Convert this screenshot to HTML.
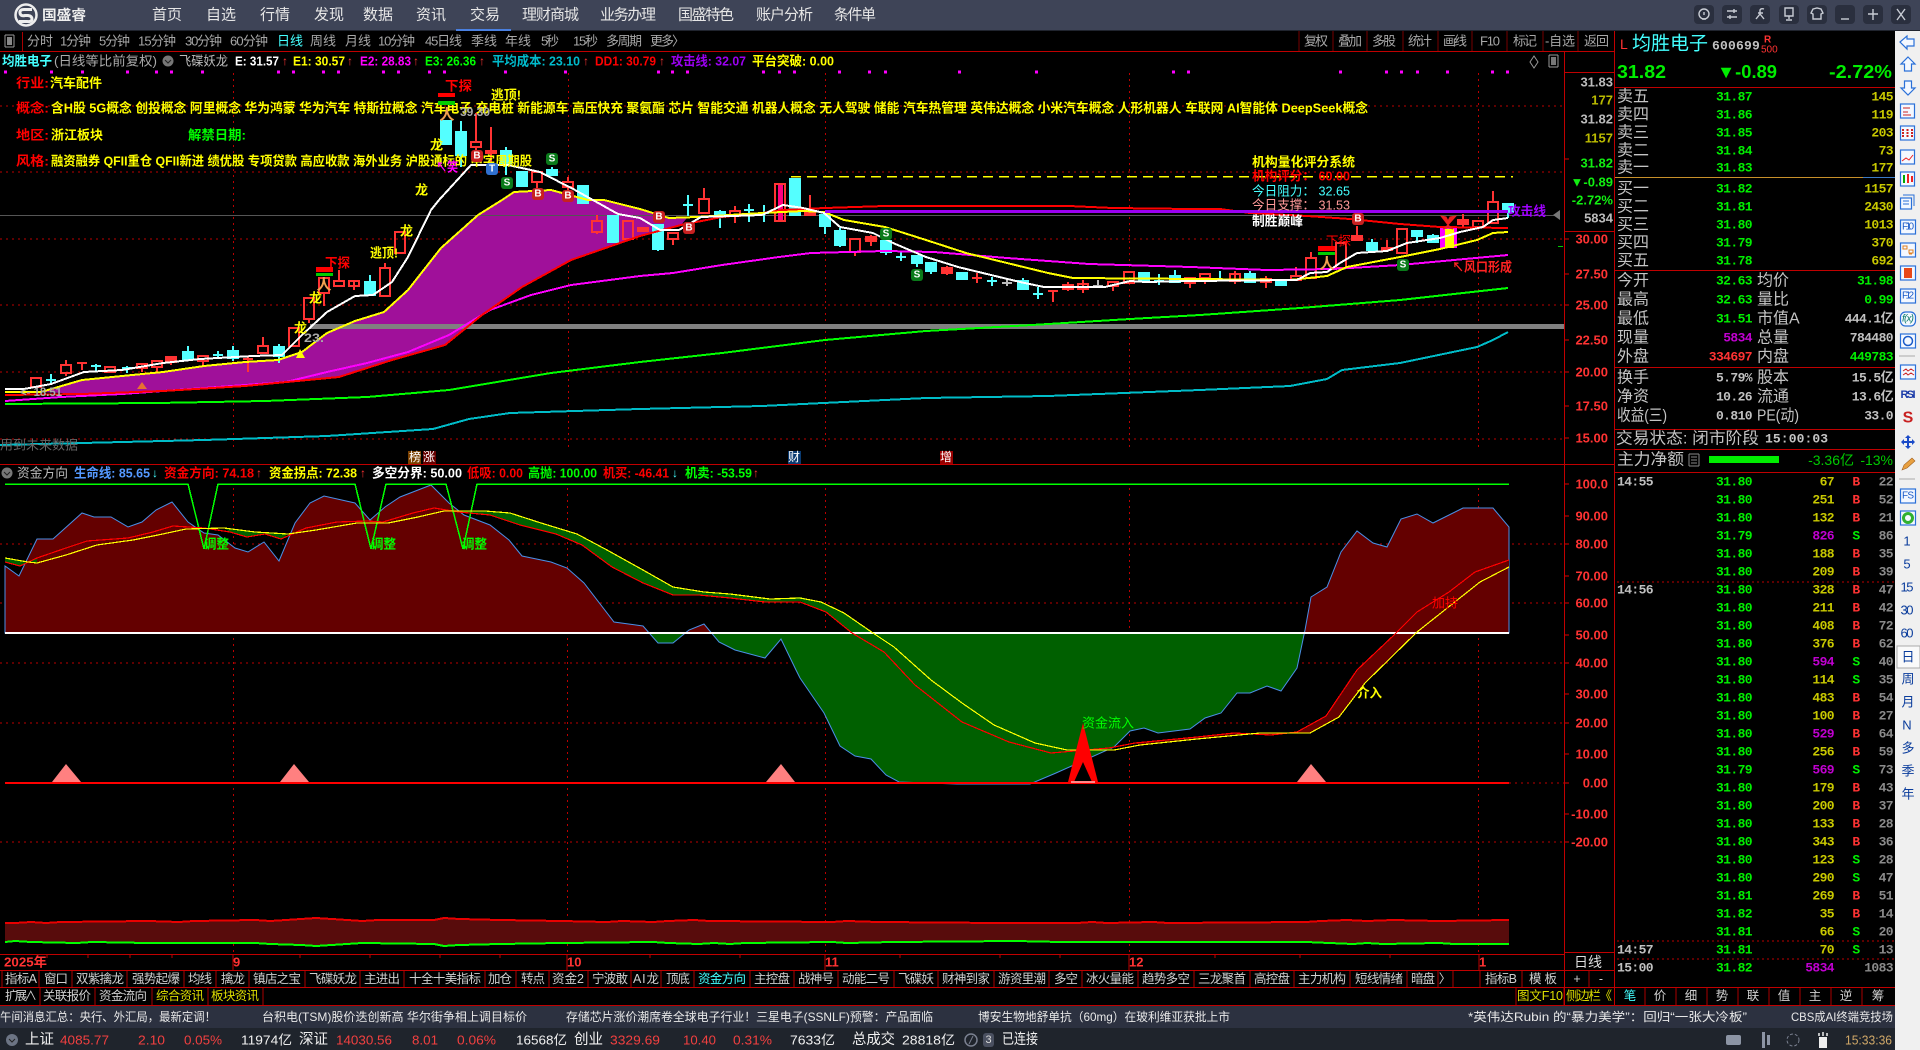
<!DOCTYPE html>
<html lang="zh"><head><meta charset="utf-8"><title>国盛睿</title>
<style>
html,body{margin:0;padding:0;background:#000;width:1920px;height:1050px;overflow:hidden}
svg{display:block;font-family:"Liberation Sans","Noto Sans CJK SC",sans-serif}
text{dominant-baseline:central;white-space:pre}
.cr{shape-rendering:crispEdges}
.b{font-weight:700}
.m{font-family:"Liberation Mono","Noto Sans CJK SC",monospace;font-size:13px;letter-spacing:-.6px;font-weight:700}
.e{text-anchor:end}
.mid{text-anchor:middle}
.lb{font-size:16px;fill:#c4c4c4}
.lg{font-size:13px;font-weight:700}
.ov{font-size:13px;font-weight:700}
.ax{font-size:13px;font-weight:700;text-anchor:end}
.tb{font-size:13px;fill:#a8a8a8}
.tab{font-size:12.5px;fill:#cfcfcf;text-anchor:middle}
.nav{font-size:15px;fill:#e6e6e6}
.news{font-size:12px;fill:#e8e8e8}
.st{font-size:13px}
.cj{font-size:14.5px}
.side{font-size:13px;fill:#0a3c9c;text-anchor:middle}
</style></head><body>
<svg xmlns="http://www.w3.org/2000/svg" width="1920" height="1050" viewBox="0 0 1920 1050">
<defs>
<clipPath id="up"><rect x="0" y="464" width="1564" height="169"/></clipPath>
<clipPath id="dn"><rect x="0" y="633" width="1564" height="160"/></clipPath>
<polygon id="bl" points="5,633 5,566 19,576 37,539 53,539 82,513 94,517 111,517 128,527 142,522 156,510 172,502 188,522 204,533 218,535 235,548 248,552 264,542 279,561 295,523 310,503 324,496 355,503 370,520 385,507 400,497 431,485 449,503 464,515 490,525 509,540 522,556 551,562 567,568 584,583 614,622 643,626 658,643 673,643 689,630 704,624 719,642 735,650 765,658 781,639 796,670 800,678 824,713 840,746 855,756 871,759 886,775 899,782 957,784 1030,784 1056,773 1114,747 1130,731 1144,728 1158,733 1190,729 1205,718 1221,713 1237,693 1250,693 1267,686 1281,691 1297,668 1305,630 1311,597 1327,587 1341,552 1357,531 1373,543 1387,547 1401,519 1417,514 1433,523 1463,508 1493,508 1509,527 1509,633"/>
</defs>
<rect width="1920" height="1050" fill="#000"/>

<!-- top bar -->
<rect class="cr" width="1920" height="30" fill="#3e4457"/>
<rect class="cr" y="30" width="1920" height="1" fill="#20242e"/>
<circle cx="26" cy="15" r="10.5" fill="none" stroke="#eee" stroke-width="2.5"/>
<path d="M32 9.5H24Q19.5 9.5 20 13T25 15.5H28Q32 16 32 19T27 21.5H19" fill="none" stroke="#eee" stroke-width="3"/>
<text class="b" x="42" y="15" font-size="14" fill="#eee" textLength="44" lengthAdjust="spacingAndGlyphs">国盛睿</text>
<g class="nav">
<text x="152" y="15">首页</text><text x="206" y="15">自选</text><text x="260" y="15">行情</text><text x="314" y="15">发现</text><text x="363" y="15">数据</text><text x="416" y="15">资讯</text><text x="470" y="15">交易</text><text x="522" y="15" textLength="57">理财商城</text><text x="600" y="15" textLength="56">业务办理</text><text x="678" y="15" textLength="56">国盛特色</text><text x="756" y="15" textLength="57">账户分析</text><text x="834" y="15" textLength="42">条件单</text>
</g>
<rect class="cr" x="456" y="29" width="55" height="2" fill="#4a80e0"/>
<g fill="#2a2f3e">
<rect x="1694" y="5" width="20" height="19" rx="4"/><rect x="1722" y="5" width="20" height="19" rx="4"/><rect x="1750" y="5" width="20" height="19" rx="4"/><rect x="1779" y="5" width="20" height="19" rx="4"/><rect x="1807" y="5" width="20" height="19" rx="4"/><rect x="1835" y="5" width="20" height="19" rx="4"/><rect x="1863" y="5" width="20" height="19" rx="4"/><rect x="1891" y="5" width="20" height="19" rx="4"/>
</g>
<g fill="none" stroke="#c8ccd4" stroke-width="1.4">
<circle cx="1704" cy="14" r="5"/><path d="M1704 12v3M1702 19h4"/>
<path d="M1727 11h10M1727 17h10M1734 9v4M1730 15v4"/>
<path d="M1756 19l4-5v-4q1-2 4-1M1758 13h5M1760 14l4 5"/>
<path d="M1785 8h8v8h-8zM1789 16v3M1786 20h6"/>
<path d="M1813 9l4-1 4 1 2 4-2 1v5h-8v-5l-2-1z"/>
<path d="M1841 19h8"/>
<path d="M1873 9v11M1868 14h10"/>
<path d="M1897 9l8 11M1905 9l-8 11"/>
</g>

<!-- right white sidebar -->
<rect class="cr" x="1895" y="31" width="25" height="1019" fill="#f0f0f0"/>

<!-- toolbar -->
<rect class="cr" x="5" y="35" width="9" height="12" fill="none" stroke="#999" rx="1"/>
<rect class="cr" x="7" y="37" width="5" height="8" fill="#888"/>
<rect class="cr" x="22" y="32" width="1" height="19" fill="#a00"/>
<g class="tb">
<text x="27" y="41">分时</text><text x="60" y="41" textLength="31">1分钟</text><text x="99" y="41" textLength="31">5分钟</text><text x="138" y="41" textLength="38">15分钟</text><text x="185" y="41" textLength="37">30分钟</text><text x="230" y="41" textLength="38">60分钟</text><text x="277" y="41" style="fill:#4ff">日线</text><text x="310" y="41">周线</text><text x="345" y="41">月线</text><text x="378" y="41" textLength="37">10分钟</text><text x="425" y="41" textLength="37">45日线</text><text x="471" y="41">季线</text><text x="505" y="41">年线</text><text x="541" y="41" textLength="18">5秒</text><text x="573" y="41" textLength="25">15秒</text><text x="606" y="41" textLength="36">多周期</text><text x="650" y="41" textLength="35">更多〉</text>
<text x="1304" y="41" textLength="24">复权</text><text x="1338" y="41" textLength="24">叠加</text><text x="1372" y="41" textLength="24">多股</text><text x="1408" y="41" textLength="24">统计</text><text x="1443" y="41" textLength="24">画线</text><text x="1480" y="41" textLength="20">F10</text><text x="1513" y="41" textLength="24">标记</text><text x="1545" y="41" textLength="30">-自选</text><text x="1584" y="41" textLength="25">返回</text>
</g>
<path class="cr" d="M1299 31V51M1333 31V51M1367 31V51M1403 31V51M1438 31V51M1472 31V51M1507 31V51M1543 31V51M1578 31V51" stroke="#700" fill="none"/>

<!-- grid main -->
<g class="cr" stroke="#b00" fill="none" stroke-dasharray="2 4">
<path d="M0 106H1564M0 172H1564M0 239H1564M0 305H1564M0 372H1564M0 439H1564"/>
<path d="M233.500 73V451M568.500 73V451M825.500 73V451M1129.500 73V451M1478.500 73V451"/>
<path d="M0 544H1564M0 603H1564M0 663H1564M0 723H1564M1509 783H1564M0 842H1564"/>
<path d="M233.500 488V953M567.500 488V953M825.500 488V953M1129.500 488V953M1478.500 488V953"/>
</g>
<!-- main cloud -->
<polygon fill="#a0109a" points="41,392 82,380 122,376 163,372 204,366 245,362 278,360 302,352 327,333 355,321 384,312 408,290 441,248 478,215 502,200 514,192 551,190 588,200 604,200 640,208 669,218 687,218 681,225 640,236 571,260 522,287 482,315 445,345 392,360 339,377 245,386 163,391 82,394"/>
<rect class="cr" x="0" y="215" width="1560" height="1" fill="#555"/>
<polygon points="1553,215 1560,210 1560,220" fill="#777"/>
<rect class="cr" x="310" y="324" width="1254" height="5" fill="#808080"/>
<path class="cr" d="M791 176.500H1513" stroke="#ff0" stroke-width="1.500" stroke-dasharray="10 6" fill="none"/>

<!-- pink dots -->
<path class="cr" stroke="#f0f" stroke-width="3" fill="none" d="M4 72h3M50 72h3M81 72h3M126 72h3M155 72h3M170 72h3M201 72h3M277 72h3M292 72h3M322 72h3M337 72h3M382 72h3M397 72h3M428 72h3M443 72h3M504 72h3M564 72h3M657 72h3M671 72h3M686 72h3M762 72h3M778 72h3M793 72h3M838 72h3M868 72h3M884 72h3M958 72h3M1035 72h3M1172 72h3M1187 72h3M1339 72h3M1385 72h3M1400 72h3M1416 72h3M1446 72h3M1491 72h3M1506 72h3"/>

<!-- candles hollow red -->
<path class="cr" fill="none" stroke="#f33" stroke-width="2" d="M31 378H41V387H31ZM66 360V365M61 365H71V373H61ZM66 373V376M105 367H115V372H105ZM137 364H147V368H137ZM142 368V372M152 361H162V367H152ZM157 367V372M198 356H208V361H198ZM203 361V365M258 346H268V353H258ZM263 337V346M289 328H299V346H289ZM304 298H314V319H304ZM309 319V323M319 278H329V293H319ZM324 293V306M334 281H344V286H334ZM339 270V281M349 281H359V286H349ZM354 280V290M380 268H390V296H380ZM385 263V268M395 232H405V253H395ZM471 142H481V147H471ZM476 113V142M476 147V157M532 172H542V182H532ZM537 182V188M563 182H573V187H563ZM568 177V182M568 187V190M592 221H602V232H592ZM597 215V221M597 232V234M623 221H633V239H623ZM668 233H678V239H668ZM673 239V245M699 199H709V213H699ZM704 188V199M730 211H740V216H730ZM735 206V211M735 216V223M775 184H785V221H775ZM850 239H860V252H850ZM855 252V256M1063 285H1073V289H1063ZM1068 282V291M1078 284H1088V289H1078ZM1083 280V293M1108 282H1118V286H1108ZM1113 286V291M1124 272H1134V283H1124ZM1185 278H1195V283H1185ZM1190 283V288M1200 274H1210V278H1200ZM1205 278V284M1230 274H1240V281H1230ZM1235 271V284M1261 279H1271V282H1261ZM1266 276V288M1291 276H1301V280H1291ZM1296 267V276M1306 258H1316V278H1306ZM1311 252V258M1336 243H1346V268H1336ZM1397 229H1407V253H1397ZM1473 221H1483V227H1473ZM1488 202H1498V223H1488ZM1493 191V202"/>
<rect class="cr" x="778" y="185" width="5" height="35" fill="#ff0080"/>
<!-- candles filled red -->
<path class="cr" fill="#f33" stroke="#f33" stroke-width="2" d="M77 363H87M82 363V370M166 357H176V362H166ZM171 362V365M243 359H253M248 357V372M486 151H496V153H486ZM491 127V163M638 228H648V231H638ZM805 213H815V215H805ZM810 195V213M866 237H876V241H866ZM871 235V246M942 268H952V273H942ZM947 266V275M972 278H982M977 273V283M1048 291H1058M1053 290V302M1352 236H1362V240H1352ZM1357 226V236M1382 248H1392V250H1382ZM1387 240V251M1458 220H1468V224H1458ZM1463 214V228"/>
<!-- candles cyan -->
<path class="cr" fill="#54ffff" stroke="#54ffff" stroke-width="2" d="M46 380H56M51 374V385M91 366H101M96 364V372M122 368H132M127 366V373M183 352H193V359H183ZM188 346V352M213 355H223M218 351V359M228 351H238V358H228ZM233 346V361M274 347H284V356H274ZM279 344V363M365 282H375V295H365ZM370 275V282M441 121H451V144H441ZM456 132H466V155H456ZM461 121V167M501 151H511V163H501ZM506 147V175M517 172H527V186H517ZM547 170H557V175H547ZM552 167V170M578 186H588V203H578ZM608 216H618V242H608ZM653 225H663V249H653ZM658 249V251M683 205H693M688 195V216M715 212H725V217H715ZM720 210V228M744 210H754M749 204V222M759 213H769M764 205V222M790 179H800V215H790ZM820 215H830V226H820ZM825 226V234M835 231H845V245H835ZM840 228V247M881 241H891V252H881ZM886 252V255M896 257H906M901 252V261M912 256H922V263H912ZM917 263V267M926 263H936V271H926ZM931 271V274M957 273H967V279H957ZM987 281H997M992 277V286M1018 281H1028V289H1018ZM1023 278V281M1033 294H1043M1038 287V299M1139 273H1149V281H1139ZM1154 281H1164M1159 274V285M1170 276H1180V282H1170ZM1175 270V276M1220 271V280M1245 274H1255V282H1245ZM1250 271V274M1276 281H1286V285H1276ZM1367 243H1377V250H1367ZM1372 239V251M1412 231H1422V236H1412ZM1417 236V243M1428 236H1438V242H1428ZM1433 234V243M1503 204H1513V212H1503ZM1508 212V218"/>
<path class="cr" fill="none" stroke="#bbb" stroke-width="2" d="M1002 283H1012M1007 278V286M1093 286H1103M1098 280V287"/>
<!-- yellow/magenta candle -->
<rect class="cr" x="1440" y="227" width="17" height="21" fill="#f0f"/><rect class="cr" x="1445" y="229" width="9" height="19" fill="#ff0"/>

<!-- MAs -->
<g fill="none" stroke-width="2" class="cr">
<polyline stroke="#00bcc8" points="0,445 82,443 204,440 327,436 433,429 469,419 510,413 640,409 762,406 926,398 1048,396 1200,390 1290,386 1327,379 1342,370 1400,363 1477,347 1493,340 1508,332"/>
<polyline stroke="#0f0" points="5,404 157,403 265,401 367,397 449,390 551,373 640,362 722,353 825,340 926,331 1032,325 1130,319 1200,315 1300,308 1400,300 1508,288"/>
<polyline stroke="#f0f" points="5,401 61,397 122,394 204,388 286,382 327,372 367,363 408,352 449,335 490,310 531,295 571,285 640,276 673,273 722,265 779,257 811,253 885,251 934,252 1007,258 1089,264 1191,267 1267,270 1333,269 1400,265 1508,255"/>
<polyline stroke="#f00" points="5,395 82,394 163,391 245,386 339,377 392,360 445,345 482,315 522,287 571,260 640,236 681,225 722,217 762,213 783,210 825,208 885,206 1069,206 1113,208 1191,209 1220,209 1250,213 1307,216 1350,219 1400,224 1440,227 1508,228"/>
<polyline stroke="#ff0" points="5,392 41,392 82,380 122,376 163,372 204,366 245,362 278,360 302,352 327,333 355,321 384,312 408,290 441,248 478,215 502,200 514,192 551,190 588,200 604,200 640,209 669,218 697,217 762,213 803,211 824,212 844,220 885,227 926,240 966,253 1007,263 1048,273 1073,278 1200,279 1290,280 1327,276 1347,267 1400,257 1440,249 1477,240 1493,233 1508,232"/>
<polyline stroke="#fff" points="5,389 24,389 51,384 84,372 122,370 163,363 200,359 253,356 282,355 302,335 327,312 355,296 373,295 392,282 408,257 431,210 439,200 471,165 508,165 540,172 575,190 618,214 640,218 660,230 679,230 701,217 762,215 783,205 803,208 824,213 840,227 873,233 893,243 926,257 958,267 991,275 1020,282 1044,287 1105,287 1130,281 1146,282 1191,281 1297,280 1310,273 1327,272 1340,263 1357,253 1387,251 1407,243 1440,238 1460,232 1483,227 1493,220 1508,218"/>
</g>
<rect class="cr" x="825" y="210" width="683" height="3" fill="#9a00f0"/>

<!-- main text overlays -->
<g class="ov">
<text x="16" y="83" fill="#f00" textLength="33" lengthAdjust="spacingAndGlyphs">行业:</text><text x="50" y="83" fill="#ff0" textLength="52" lengthAdjust="spacingAndGlyphs">汽车配件</text>
<text x="16" y="108" fill="#f00" textLength="33" lengthAdjust="spacingAndGlyphs">概念:</text><text x="51" y="108" fill="#ff0" textLength="1317" lengthAdjust="spacingAndGlyphs">含H股 5G概念 创投概念 阿里概念 华为鸿蒙 华为汽车 特斯拉概念 汽车电子 充电桩 新能源车 高压快充 聚氨酯 芯片 智能交通 机器人概念 无人驾驶 储能 汽车热管理 英伟达概念 小米汽车概念 人形机器人 车联网 AI智能体 DeepSeek概念</text>
<text x="16" y="135" fill="#f00" textLength="33" lengthAdjust="spacingAndGlyphs">地区:</text><text x="51" y="135" fill="#ff0" textLength="52" lengthAdjust="spacingAndGlyphs">浙江板块</text>
<text x="188" y="135" fill="#0f0" textLength="58" lengthAdjust="spacingAndGlyphs">解禁日期:</text>
<text x="16" y="161" fill="#f00" textLength="33" lengthAdjust="spacingAndGlyphs">风格:</text><text x="51" y="161" fill="#ff0" textLength="481" lengthAdjust="spacingAndGlyphs">融资融券 QFII重仓 QFII新进 绩优股 专项贷款 高应收款 海外业务 沪股通标的 中字周期股</text>
</g>
<!-- marks -->
<rect class="cr" x="438" y="93" width="17" height="4" fill="#f00"/><rect class="cr" x="438" y="101" width="17" height="4" fill="#0c0"/>
<rect class="cr" x="316" y="267" width="17" height="5" fill="#f00"/><rect class="cr" x="316" y="273" width="17" height="3" fill="#0c0"/>
<rect class="cr" x="1318" y="246" width="17" height="5" fill="#f00"/><rect class="cr" x="1318" y="252" width="17" height="3" fill="#0c0"/>
<g class="ov">
<text x="445" y="86" fill="#f00" textLength="27" lengthAdjust="spacingAndGlyphs">下探</text>
<text x="491" y="95" fill="#ff0" textLength="30" lengthAdjust="spacingAndGlyphs">逃顶!</text>
<text x="325" y="263" fill="#f00" textLength="25" lengthAdjust="spacingAndGlyphs">下探</text>
<text x="370" y="253" fill="#ff0" textLength="28" lengthAdjust="spacingAndGlyphs">逃顶!</text>
<text x="1326" y="241" fill="#f00" font-weight="400" textLength="25" lengthAdjust="spacingAndGlyphs">下探</text>
<text x="430" y="145" fill="#ff0">龙</text><text x="415" y="190" fill="#ff0">龙</text>
<text x="309" y="298" fill="#ff0">龙</text><text x="294" y="328" fill="#ff0">龙</text><text x="400" y="231" fill="#ff0">龙</text>
<text x="436" y="167" fill="#f0f" textLength="22" lengthAdjust="spacingAndGlyphs">↖笑</text>
<text x="460" y="112" fill="#aaa" font-size="12" textLength="30" lengthAdjust="spacingAndGlyphs">39.30</text>
<text x="20" y="392" fill="#aaa" font-size="12" textLength="42" lengthAdjust="spacingAndGlyphs">&lt;- 18.51</text>
<text x="304" y="338" fill="#aaa" font-size="12" textLength="20" lengthAdjust="spacingAndGlyphs">23.</text>
</g>
<g font-size="15" font-weight="700" fill="#f0a050" text-anchor="middle"><text x="447" y="115">人</text><text x="324" y="285">人</text><text x="1327" y="264">人</text></g>
<polygon points="137,389 142,382 147,389" fill="#e87030"/>
<polygon points="300,349 305,358 296,358" fill="#ff0"/>
<!-- badges -->
<g fill="#c82020"><rect x="471" y="150" width="12" height="12" rx="3"/><rect x="532" y="188" width="12" height="12" rx="3"/><rect x="562" y="190" width="12" height="12" rx="3"/><rect x="653" y="211" width="12" height="12" rx="3"/><rect x="683" y="222" width="12" height="12" rx="3"/><rect x="1352" y="213" width="12" height="12" rx="3"/></g>
<g fill="#0a7a1a"><rect x="546" y="153" width="12" height="12" rx="3"/><rect x="501" y="177" width="12" height="12" rx="3"/><rect x="880" y="228" width="12" height="12" rx="3"/><rect x="911" y="269" width="12" height="12" rx="3"/><rect x="1397" y="259" width="12" height="12" rx="3"/></g>
<rect x="486" y="163" width="12" height="12" rx="3" fill="#3070d0"/>
<g font-size="10" fill="#fff" text-anchor="middle" font-weight="700"><text x="477" y="156">B</text><text x="538" y="194">B</text><text x="568" y="196">B</text><text x="659" y="217">B</text><text x="689" y="228">B</text><text x="1358" y="219">B</text><text x="552" y="159">S</text><text x="507" y="183">S</text><text x="886" y="234">S</text><text x="917" y="275">S</text><text x="1403" y="265">S</text><text x="492" y="169">T</text></g>
<path d="M1448 225L1441 216 1446 217 1448 221 1450 217 1456 216ZM1448 225L1443 229 1447 228ZM1448 225L1453 229 1449 228Z" fill="#e82020" stroke="#e82020"/>
<text class="ov" x="1508" y="211" fill="#a000ff" font-weight="400" textLength="38" lengthAdjust="spacingAndGlyphs">攻击线</text>
<text class="ov" x="1452" y="267" fill="#f22" textLength="60" lengthAdjust="spacingAndGlyphs">↖风口形成</text>
<g class="ov" font-size="13">
<text x="1252" y="162" fill="#ff0" textLength="103" lengthAdjust="spacingAndGlyphs">机构量化评分系统</text>
<text x="1252" y="176" fill="#f00" textLength="98" lengthAdjust="spacingAndGlyphs">机构评分： 60.00</text>
<text x="1252" y="191" fill="#4ff" font-weight="400" textLength="98" lengthAdjust="spacingAndGlyphs">今日阻力： 32.65</text>
<text x="1252" y="205" fill="#f99" font-weight="400" textLength="98" lengthAdjust="spacingAndGlyphs">今日支撑： 31.53</text>
<text x="1252" y="221" fill="#fff" textLength="51" lengthAdjust="spacingAndGlyphs">制胜巅峰</text>
</g>
<text x="0" y="445" font-size="13" fill="#666" textLength="78" lengthAdjust="spacingAndGlyphs">用到未来数据</text>
<rect class="cr" x="408" y="451" width="13" height="13" fill="#7a4000"/><rect class="cr" x="423" y="451" width="13" height="13" fill="#600"/>
<rect class="cr" x="788" y="451" width="13" height="13" fill="#0a3a70"/><rect class="cr" x="940" y="451" width="13" height="13" fill="#900"/>
<g font-size="12" fill="#fff" text-anchor="middle"><text x="415" y="457">榜</text><text x="429" y="457">涨</text><text x="794" y="457">财</text><text x="946" y="457">增</text></g>
<path d="M1534 56l4 6-4 6-4-6z" fill="none" stroke="#999"/><rect class="cr" x="1549" y="55" width="9" height="12" rx="1" fill="none" stroke="#999"/><rect class="cr" x="1551" y="57" width="5" height="8" fill="#777"/>

<!-- legend main -->
<g class="lg">
<text x="2" y="61" fill="#4ff" textLength="50" lengthAdjust="spacingAndGlyphs">均胜电子</text>
<text x="54" y="61" fill="#aaa" font-weight="400" textLength="103" lengthAdjust="spacingAndGlyphs">(日线等比前复权)</text>
<circle cx="168" cy="61" r="5.500" fill="#777"/><path d="M165 60l3 3 3-3" stroke="#222" fill="none"/>
<text x="179" y="61" fill="#bbb" font-weight="400" textLength="49" lengthAdjust="spacingAndGlyphs">飞碟妖龙</text>
<text x="235" y="61" fill="#fff" textLength="44" lengthAdjust="spacingAndGlyphs">E: 31.57</text><text x="282" y="61" fill="#f33" font-weight="400" font-size="12">↑</text>
<text x="293" y="61" fill="#ff0" textLength="52" lengthAdjust="spacingAndGlyphs">E1: 30.57</text><text x="347" y="61" fill="#f33" font-weight="400" font-size="12">↑</text>
<text x="360" y="61" fill="#f0f" textLength="51" lengthAdjust="spacingAndGlyphs">E2: 28.83</text><text x="413" y="61" fill="#f33" font-weight="400" font-size="12">↑</text>
<text x="425" y="61" fill="#0f0" textLength="51" lengthAdjust="spacingAndGlyphs">E3: 26.36</text><text x="479" y="61" fill="#f33" font-weight="400" font-size="12">↑</text>
<text x="492" y="61" fill="#0bc" textLength="88" lengthAdjust="spacingAndGlyphs">平均成本: 23.10</text><text x="583" y="61" fill="#f33" font-weight="400" font-size="12">↑</text>
<text x="595" y="61" fill="#f00" textLength="61" lengthAdjust="spacingAndGlyphs">DD1: 30.79</text><text x="659" y="61" fill="#f33" font-weight="400" font-size="12">↑</text>
<text x="671" y="61" fill="#9a00f0" textLength="75" lengthAdjust="spacingAndGlyphs">攻击线: 32.07</text>
<text x="752" y="61" fill="#ff0" textLength="82" lengthAdjust="spacingAndGlyphs">平台突破: 0.00</text>
</g>

<!-- lower panel -->
<use href="#bl" fill="#640000" clip-path="url(#up)"/>
<use href="#bl" fill="#006000" clip-path="url(#dn)"/>
<use href="#bl" fill="none" stroke="#4a90e8" stroke-width="1"/>
<polygon fill="#006000" points="444,511 485,511 510,513 541,523 577,534 607,550 643,570 673,587 704,592 730,594 770,599 800,597 821,602 844,613 873,633 894,647 931,680 962,703 994,725 1035,743 1067,750 1114,750 1109,748 1051,753 1009,742 962,722 915,685 884,652 852,633 826,612 800,601 765,602 730,598 699,595 673,595 643,583 612,567 582,545 556,534 520,525 490,515 459,512 444,509"/>
<polygon fill="#006000" points="5,558 28,562 37,563 37,558 20,566 5,562"/>
<polygon fill="#006000" points="224,528 255,532 288,534 281,539 265,534 247,537 230,532"/>
<polygon fill="#640000" points="1135,743 1197,737 1234,733 1271,735 1297,732 1326,716 1357,670 1394,635 1417,612 1449,592 1475,572 1509,560 1509,567 1480,582 1417,632 1365,683 1339,717 1310,733 1260,733 1197,739 1140,745"/>
<rect class="cr" x="5" y="632" width="1504" height="2" fill="#fff"/>
<polyline class="cr" fill="none" stroke="#0f0" stroke-width="1.500" points="5,484 188,484 204,549 218,484 355,484 371,549 386,484 446,484 463,549 477,484 1509,484"/>
<polyline class="cr" fill="none" stroke="#f00" stroke-width="1.200" points="5,562 20,566 37,558 66,548 87,541 128,538 153,532 173,526 204,528 230,532 247,537 265,534 281,539 306,528 337,522 367,521 383,522 413,513 434,508 459,512 490,515 520,525 556,534 582,545 612,567 643,583 673,595 699,595 730,598 765,602 800,602 826,612 852,633 884,652 915,685 962,722 1009,742 1051,753 1109,748 1135,743 1197,737 1234,733 1271,735 1297,732 1326,716 1357,670 1394,635 1417,612 1449,592 1475,572 1509,560"/>
<polyline class="cr" fill="none" stroke="#ff0" stroke-width="1.200" points="5,558 28,562 37,563 66,555 97,545 133,540 158,535 186,529 224,528 255,532 288,534 316,530 357,523 388,523 418,517 444,511 485,511 510,513 541,523 577,534 607,550 643,570 673,587 704,592 730,594 770,599 800,598 821,602 844,613 873,633 894,647 931,680 962,703 994,725 1035,743 1067,750 1114,750 1140,745 1197,739 1260,733 1310,733 1339,717 1365,683 1417,632 1480,582 1509,567"/>
<rect class="cr" x="5" y="782" width="1504" height="2" fill="#f00"/>
<g fill="#ff8080"><polygon points="66,764 81,782 52,782"/><polygon points="294,764 309,782 280,782"/><polygon points="781,764 795,782 766,782"/><polygon points="1311,764 1326,782 1297,782"/></g>
<polygon points="1083,723 1098,782 1092,782 1083,762 1074,782 1068,782" fill="#f00"/>
<rect class="cr" x="1071" y="781" width="24" height="2" fill="#f88"/>
<g class="ov">
<text x="204" y="544" fill="#0f0" textLength="25" lengthAdjust="spacingAndGlyphs">调整</text><text x="371" y="544" fill="#0f0" textLength="25" lengthAdjust="spacingAndGlyphs">调整</text><text x="462" y="544" fill="#0f0" textLength="25" lengthAdjust="spacingAndGlyphs">调整</text>
<text x="1082" y="723" fill="#0f0" font-weight="400" textLength="52" lengthAdjust="spacingAndGlyphs">资金流入</text>
<text x="1432" y="603" fill="#f00" font-weight="400" textLength="26" lengthAdjust="spacingAndGlyphs">加持</text>
<text x="1357" y="693" fill="#ff0" textLength="25" lengthAdjust="spacingAndGlyphs">介入</text>
</g>
<!-- legend lower -->
<g class="lg">
<circle cx="7" cy="473" r="5.500" fill="#777"/><path d="M4 472l3 3 3-3" stroke="#222" fill="none"/>
<text x="17" y="473" fill="#bbb" font-weight="400" textLength="51" lengthAdjust="spacingAndGlyphs">资金方向</text>
<text x="74" y="473" fill="#5599ff" textLength="76" lengthAdjust="spacingAndGlyphs">生命线: 85.65</text><text x="152" y="473" fill="#4ff" font-weight="400" font-size="12">↓</text>
<text x="164" y="473" fill="#f00" textLength="90" lengthAdjust="spacingAndGlyphs">资金方向: 74.18</text><text x="256" y="473" fill="#f33" font-weight="400" font-size="12">↑</text>
<text x="269" y="473" fill="#ff0" textLength="88" lengthAdjust="spacingAndGlyphs">资金拐点: 72.38</text><text x="360" y="473" fill="#f33" font-weight="400" font-size="12">↑</text>
<text x="372" y="473" fill="#fff" textLength="90" lengthAdjust="spacingAndGlyphs">多空分界: 50.00</text>
<text x="467" y="473" fill="#f00" textLength="56" lengthAdjust="spacingAndGlyphs">低吸: 0.00</text>
<text x="528" y="473" fill="#0f0" textLength="69" lengthAdjust="spacingAndGlyphs">高抛: 100.00</text>
<text x="603" y="473" fill="#f00" textLength="66" lengthAdjust="spacingAndGlyphs">机买: -46.41</text><text x="672" y="473" fill="#4ff" font-weight="400" font-size="12">↓</text>
<text x="685" y="473" fill="#0f0" textLength="67" lengthAdjust="spacingAndGlyphs">机卖: -53.59</text><text x="753" y="473" fill="#f33" font-weight="400" font-size="12">↑</text>
</g>
<!-- band -->
<polygon fill="#580c0c" points="5,923 15,923 31,922 46,923 61,922 148,921 179,922 194,921 255,920 270,921 286,920 301,919 316,918 332,919 347,920 362,921 378,920 434,920 444,918 459,919 500,920 561,921 607,922 622,921 653,922 668,921 694,920 709,921 832,922 847,921 878,922 1000,923 1077,923 1092,922 1107,923 1153,922 1168,923 1306,922 1321,921 1347,920 1367,921 1393,920 1439,921 1509,920 1509,944 1454,944 1439,943 1383,944 1367,943 1353,944 1306,942 1061,942 1015,941 893,942 847,943 832,942 745,943 730,944 714,943 699,944 668,943 653,942 561,943 500,944 459,945 444,946 434,944 362,943 347,944 316,946 301,945 270,944 255,943 148,943 92,942 77,943 31,942 15,941 5,942"/>
<polyline class="cr" fill="none" stroke="#e80000" stroke-width="2" points="5,923 15,923 31,922 46,923 61,922 148,921 179,922 194,921 255,920 270,921 286,920 301,919 316,918 332,919 347,920 362,921 378,920 434,920 444,918 459,919 500,920 561,921 607,922 622,921 653,922 668,921 694,920 709,921 832,922 847,921 878,922 1000,923 1077,923 1092,922 1107,923 1153,922 1168,923 1306,922 1321,921 1347,920 1367,921 1393,920 1439,921 1509,920"/>
<polyline class="cr" fill="none" stroke="#0f0" stroke-width="2" points="5,942 15,941 31,942 77,943 92,942 148,943 255,943 270,944 301,945 316,946 347,944 362,943 434,944 444,946 459,945 500,944 561,943 653,942 668,943 699,944 714,943 730,944 745,943 832,942 847,943 893,942 1015,941 1061,942 1306,942 1353,944 1367,943 1383,944 1439,943 1454,944 1509,944"/>

<!-- axis -->
<g class="ax" fill="#bbb"><text x="1613" y="82">31.83</text><text x="1613" y="119">31.82</text></g>
<g class="ax" fill="#bb0"><text x="1613" y="100">177</text><text x="1613" y="138">1157</text></g>
<g class="ax" fill="#1e1"><text x="1613" y="163">31.82</text><text x="1613" y="182">▼-0.89</text><text x="1613" y="200">-2.72%</text></g>
<text class="ax" x="1613" y="218" fill="#bbb">5834</text>
<g class="ax" fill="#f33">
<text x="1608" y="239">30.00</text><text x="1608" y="274">27.50</text><text x="1608" y="305">25.00</text><text x="1608" y="340">22.50</text><text x="1608" y="372">20.00</text><text x="1608" y="406">17.50</text><text x="1608" y="438">15.00</text>
<text x="1608" y="484">100.0</text><text x="1608" y="516">90.00</text><text x="1608" y="544">80.00</text><text x="1608" y="576">70.00</text><text x="1608" y="603">60.00</text><text x="1608" y="635">50.00</text><text x="1608" y="663">40.00</text><text x="1608" y="694">30.00</text><text x="1608" y="723">20.00</text><text x="1608" y="754">10.00</text><text x="1608" y="783">0.00</text><text x="1608" y="814">-10.00</text><text x="1608" y="842">-20.00</text>
</g>
<path class="cr" stroke="#d00" fill="none" d="M1564 159H1569M1564 239H1569M1564 274H1569M1564 305H1569M1564 340H1569M1564 372H1569M1564 406H1569M1564 438H1569M1564 484H1569M1564 516H1569M1564 544H1569M1564 576H1569M1564 603H1569M1564 635H1569M1564 663H1569M1564 694H1569M1564 723H1569M1564 754H1569M1564 783H1569M1564 814H1569M1564 842H1569"/>
<rect class="cr" x="1558" y="246" width="5" height="1" fill="#0c0"/>

<!-- date axis -->
<g class="b" font-size="13" fill="#f33"><text x="4" y="962" textLength="43" lengthAdjust="spacingAndGlyphs">2025年</text><text x="233" y="962">9</text><text x="567" y="962">10</text><text x="825" y="962">11</text><text x="1129" y="962">12</text><text x="1479" y="962">1</text></g>
<path class="cr" stroke="#b00" fill="none" d="M47 954V958M88 954V958M130 954V958M172 954V958M233 954V970M300 954V958M370 954V958M440 954V958M500 954V958M567 954V970M650 954V958M740 954V958M825 954V970M900 954V958M1000 954V958M1060 954V958M1129 954V970M1215 954V958M1300 954V958M1390 954V958M1479 954V970"/>
<text x="1588" y="962" font-size="14" fill="#ddd" class="mid">日线</text>

<!-- tabs -->
<g class="tab">
<text x="21" y="979" textLength="32">指标A</text><text x="56" y="979" textLength="24">窗口</text><text x="100" y="979" textLength="48">双紫擒龙</text><text x="156" y="979" textLength="48">强势起爆</text><text x="200" y="979" textLength="24">均线</text><text x="233" y="979" textLength="24">擒龙</text><text x="277" y="979" textLength="48">镇店之宝</text><text x="333" y="979" textLength="48">飞碟妖龙</text><text x="382" y="979" textLength="36">主进出</text><text x="445" y="979" textLength="72">十全十美指标</text><text x="500" y="979" textLength="24">加仓</text><text x="533" y="979" textLength="24">转点</text><text x="568" y="979" textLength="32">资金2</text><text x="610" y="979" textLength="36">宁波敢</text><text x="646" y="979" textLength="26">AI龙</text><text x="678" y="979" textLength="24">顶底</text><text x="722" y="979" textLength="48" style="fill:#4ff">资金方向</text><text x="772" y="979" textLength="36">主控盘</text><text x="816" y="979" textLength="36">战神号</text><text x="866" y="979" textLength="48">动能二号</text><text x="916" y="979" textLength="36">飞碟妖</text><text x="966" y="979" textLength="48">财神到家</text><text x="1022" y="979" textLength="48">游资里潮</text><text x="1066" y="979" textLength="24">多空</text><text x="1110" y="979" textLength="48">冰火量能</text><text x="1166" y="979" textLength="48">趋势多空</text><text x="1222" y="979" textLength="48">三龙聚首</text><text x="1272" y="979" textLength="36">高控盘</text><text x="1322" y="979" textLength="48">主力机构</text><text x="1379" y="979" textLength="48">短线情绪</text><text x="1423" y="979" textLength="24">暗盘</text><text x="1445" y="979">〉</text><text x="1501" y="979" textLength="32">指标B</text><text x="1543" y="979" textLength="28">模 板</text><text x="1577" y="979">+</text><text x="1601" y="979">-</text>
<text x="21" y="996" textLength="32">扩展∧</text><text x="67" y="996" textLength="48">关联报价</text><text x="123" y="996" textLength="48">资金流向</text><text x="180" y="996" textLength="48" style="fill:#dd0">综合资讯</text><text x="235" y="996" textLength="48" style="fill:#dd0">板块资讯</text>
<text x="1540" y="996" textLength="46" style="fill:#dd0">图文F10</text><text x="1589" y="996" textLength="46" style="fill:#dd0">侧边栏《</text>
<text x="1630" y="996" style="fill:#4ff">笔</text><text x="1660" y="996">价</text><text x="1691" y="996">细</text><text x="1722" y="996">势</text><text x="1753" y="996">联</text><text x="1784" y="996">值</text><text x="1815" y="996">主</text><text x="1846" y="996">逆</text><text x="1878" y="996">筹</text>
</g>
<path class="cr" stroke="#a00" fill="none" d="M2 970V987M39 970V987M72 970V987M127 970V987M184 970V987M216 970V987M249 970V987M305 970V987M360 970V987M404 970V987M485 970V987M516 970V987M549 970V987M588 970V987M631 970V987M661 970V987M694 970V987M750 970V987M794 970V987M838 970V987M894 970V987M938 970V987M994 970V987M1049 970V987M1082 970V987M1138 970V987M1194 970V987M1250 970V987M1294 970V987M1350 970V987M1407 970V987M1438 970V987M1453 970V987M1480 970V987M1522 970V987M1589 970V987
M40 987V1005M95 987V1005M152 987V1005M208 987V1005M263 987V1005M1516 987V1005M1564 987V1005M1645 987V1005M1676 987V1005M1707 987V1005M1738 987V1005M1769 987V1005M1800 987V1005M1831 987V1005M1862 987V1005"/>

<!-- frame lines -->
<g class="cr" fill="#c00000">
<rect x="0" y="51" width="1615" height="1"/>
<rect x="1564" y="72" width="51" height="1"/>
<rect x="1564" y="231" width="51" height="1"/>
<rect x="0" y="464" width="1615" height="1"/>
<rect x="0" y="954" width="1564" height="1"/><rect x="1564" y="952" width="51" height="1"/>
<rect x="0" y="970" width="1615" height="1"/>
<rect x="0" y="987" width="1895" height="1"/>
<rect x="1564" y="52" width="1" height="953"/>
<rect x="1614" y="31" width="1" height="974"/>
<rect x="1615" y="87" width="280" height="1"/>
<rect x="1615" y="270" width="280" height="1"/>
<rect x="1615" y="367" width="280" height="1"/>
<rect x="1615" y="429" width="280" height="1"/>
<rect x="1615" y="449" width="280" height="1"/>
<rect x="1615" y="472" width="280" height="1"/>
</g>
<rect class="cr" x="1615" y="177" width="248" height="1" fill="#c8902a"/><rect class="cr" x="1863" y="177" width="32" height="1" fill="#3a7ac8"/>

<!-- quote panel -->
<text x="1620" y="44" font-size="14" fill="#f33">L</text>
<text x="1632" y="44" font-size="19" fill="#4ff" textLength="76" lengthAdjust="spacingAndGlyphs">均胜电子</text>
<text class="m" x="1712" y="46" fill="#c0c0c0" style="letter-spacing:.2px">600699</text>
<text x="1764" y="40" font-size="10" fill="#f33" font-weight="700">R</text><text x="1761" y="50" font-size="10" fill="#f33">500</text>
<g class="b" font-size="18" fill="#0e0"><text x="1617" y="72" textLength="49" lengthAdjust="spacingAndGlyphs">31.82</text><text x="1717" y="72" textLength="60" lengthAdjust="spacingAndGlyphs">▼-0.89</text><text x="1829" y="72" textLength="63" lengthAdjust="spacingAndGlyphs">-2.72%</text></g>
<g class="lb">
<text x="1617" y="97">卖五</text><text x="1617" y="115">卖四</text><text x="1617" y="133">卖三</text><text x="1617" y="151">卖二</text><text x="1617" y="168">卖一</text>
<text x="1617" y="189">买一</text><text x="1617" y="207">买二</text><text x="1617" y="225">买三</text><text x="1617" y="243">买四</text><text x="1617" y="261">买五</text>
<text x="1617" y="281">今开</text><text x="1617" y="300">最高</text><text x="1617" y="319">最低</text><text x="1617" y="338">现量</text><text x="1617" y="357">外盘</text>
<text x="1757" y="281">均价</text><text x="1757" y="300">量比</text><text x="1757" y="319">市值A</text><text x="1757" y="338">总量</text><text x="1757" y="357">内盘</text>
<text x="1617" y="378">换手</text><text x="1617" y="397">净资</text><text x="1617" y="416" textLength="50" lengthAdjust="spacingAndGlyphs">收益(三)</text>
<text x="1757" y="378">股本</text><text x="1757" y="397">流通</text><text x="1757" y="416" textLength="42" lengthAdjust="spacingAndGlyphs">PE(动)</text>
<text x="1616" y="439" textLength="143" lengthAdjust="spacingAndGlyphs">交易状态: 闭市阶段</text>
<text x="1617" y="460" textLength="67" lengthAdjust="spacingAndGlyphs">主力净额</text>
</g>
<text class="m" x="1765" y="439" fill="#c4c4c4" style="letter-spacing:.1px">15:00:03</text>
<rect class="cr" x="1689" y="454" width="10" height="12" rx="1" fill="none" stroke="#888"/><path class="cr" d="M1691 457h6M1691 460h6M1691 463h6" stroke="#888"/>
<rect class="cr" x="1709" y="456" width="70" height="7" fill="#0e0"/>
<text class="e" x="1854" y="460" font-size="14" fill="#0c0">-3.36亿</text><text class="e" x="1893" y="460" font-size="14" fill="#0c0">-13%</text>
<g class="m e" fill="#0e0">
<text x="1752" y="97">31.87</text><text x="1752" y="115">31.86</text><text x="1752" y="133">31.85</text><text x="1752" y="151">31.84</text><text x="1752" y="168">31.83</text><text x="1752" y="189">31.82</text><text x="1752" y="207">31.81</text><text x="1752" y="225">31.80</text><text x="1752" y="243">31.79</text><text x="1752" y="261">31.78</text>
<text x="1752" y="281">32.63</text><text x="1752" y="300">32.63</text><text x="1752" y="319">31.51</text>
<text x="1893" y="281">31.98</text><text x="1893" y="300">0.99</text><text x="1893" y="357">449783</text>
</g>
<g class="m e" fill="#c8c800">
<text x="1893" y="97">145</text><text x="1893" y="115">119</text><text x="1893" y="133">203</text><text x="1893" y="151">73</text><text x="1893" y="168">177</text><text x="1893" y="189">1157</text><text x="1893" y="207">2430</text><text x="1893" y="225">1013</text><text x="1893" y="243">370</text><text x="1893" y="261">692</text>
</g>
<text class="m e" x="1752" y="338" fill="#c000d0">5834</text><text class="m e" x="1752" y="357" fill="#f33">334697</text>
<g class="m e" fill="#c0c0c0">
<text x="1893" y="319">444.1亿</text><text x="1893" y="338">784480</text>
<text x="1752" y="378">5.79%</text><text x="1752" y="397">10.26</text><text x="1752" y="416">0.810</text>
<text x="1893" y="378">15.5亿</text><text x="1893" y="397">13.6亿</text><text x="1893" y="416">33.0</text>
</g>

<!-- ticks -->
<g class="m" fill="#c0c0c0"><text x="1617" y="482">14:55</text><text x="1617" y="590">14:56</text><text x="1617" y="950">14:57</text><text x="1617" y="968">15:00</text></g>
<path class="cr" d="M1617 582H1895M1617 941H1895M1617 959H1895" stroke="#b00" stroke-dasharray="2 3" fill="none"/>
<g class="m e" fill="#0e0">
<text x="1752" y="482">31.80</text><text x="1752" y="500">31.80</text><text x="1752" y="518">31.80</text><text x="1752" y="536">31.79</text><text x="1752" y="554">31.80</text><text x="1752" y="572">31.80</text><text x="1752" y="590">31.80</text><text x="1752" y="608">31.80</text><text x="1752" y="626">31.80</text><text x="1752" y="644">31.80</text><text x="1752" y="662">31.80</text><text x="1752" y="680">31.80</text><text x="1752" y="698">31.80</text><text x="1752" y="716">31.80</text><text x="1752" y="734">31.80</text><text x="1752" y="752">31.80</text><text x="1752" y="770">31.79</text><text x="1752" y="788">31.80</text><text x="1752" y="806">31.80</text><text x="1752" y="824">31.80</text><text x="1752" y="842">31.80</text><text x="1752" y="860">31.80</text><text x="1752" y="878">31.80</text><text x="1752" y="896">31.81</text><text x="1752" y="914">31.82</text><text x="1752" y="932">31.81</text><text x="1752" y="950">31.81</text><text x="1752" y="968">31.82</text>
</g>
<g class="m e" fill="#c8c800">
<text x="1834" y="482">67</text><text x="1834" y="500">251</text><text x="1834" y="518">132</text><text x="1834" y="554">188</text><text x="1834" y="572">209</text><text x="1834" y="590">328</text><text x="1834" y="608">211</text><text x="1834" y="626">408</text><text x="1834" y="644">376</text><text x="1834" y="680">114</text><text x="1834" y="698">483</text><text x="1834" y="716">100</text><text x="1834" y="752">256</text><text x="1834" y="788">179</text><text x="1834" y="806">200</text><text x="1834" y="824">133</text><text x="1834" y="842">343</text><text x="1834" y="860">123</text><text x="1834" y="878">290</text><text x="1834" y="896">269</text><text x="1834" y="914">35</text><text x="1834" y="932">66</text><text x="1834" y="950">70</text>
</g>
<g class="m e" fill="#c000d0"><text x="1834" y="536">826</text><text x="1834" y="662">594</text><text x="1834" y="734">529</text><text x="1834" y="770">569</text><text x="1834" y="968">5834</text></g>
<g class="m mid" fill="#f33"><text x="1856" y="482">B</text><text x="1856" y="500">B</text><text x="1856" y="518">B</text><text x="1856" y="554">B</text><text x="1856" y="572">B</text><text x="1856" y="590">B</text><text x="1856" y="608">B</text><text x="1856" y="626">B</text><text x="1856" y="644">B</text><text x="1856" y="698">B</text><text x="1856" y="716">B</text><text x="1856" y="734">B</text><text x="1856" y="752">B</text><text x="1856" y="788">B</text><text x="1856" y="806">B</text><text x="1856" y="824">B</text><text x="1856" y="842">B</text><text x="1856" y="896">B</text><text x="1856" y="914">B</text></g>
<g class="m mid" fill="#0e0"><text x="1856" y="536">S</text><text x="1856" y="662">S</text><text x="1856" y="680">S</text><text x="1856" y="770">S</text><text x="1856" y="860">S</text><text x="1856" y="878">S</text><text x="1856" y="932">S</text><text x="1856" y="950">S</text></g>
<g class="m e" fill="#8a8a8a">
<text x="1893" y="482">22</text><text x="1893" y="500">52</text><text x="1893" y="518">21</text><text x="1893" y="536">86</text><text x="1893" y="554">35</text><text x="1893" y="572">39</text><text x="1893" y="590">47</text><text x="1893" y="608">42</text><text x="1893" y="626">72</text><text x="1893" y="644">62</text><text x="1893" y="662">40</text><text x="1893" y="680">35</text><text x="1893" y="698">54</text><text x="1893" y="716">27</text><text x="1893" y="734">64</text><text x="1893" y="752">59</text><text x="1893" y="770">73</text><text x="1893" y="788">43</text><text x="1893" y="806">37</text><text x="1893" y="824">28</text><text x="1893" y="842">36</text><text x="1893" y="860">28</text><text x="1893" y="878">47</text><text x="1893" y="896">51</text><text x="1893" y="914">14</text><text x="1893" y="932">20</text><text x="1893" y="950">13</text><text x="1893" y="968">1083</text>
</g>

<!-- news bar -->
<rect class="cr" x="0" y="1005" width="1895" height="1" fill="#c00000"/>
<rect class="cr" x="0" y="1006" width="1895" height="22" fill="#2c3140"/>
<rect class="cr" x="0" y="1028" width="1895" height="22" fill="#1f242c"/>
<g class="news">
<text x="0" y="1017" textLength="216" lengthAdjust="spacingAndGlyphs">午间消息汇总：央行、外汇局，最新定调！</text>
<text x="262" y="1017" textLength="265" lengthAdjust="spacingAndGlyphs">台积电(TSM)股价迭创新高 华尔街争相上调目标价</text>
<text x="566" y="1017" textLength="367" lengthAdjust="spacingAndGlyphs">存储芯片涨价潮席卷全球电子行业！三星电子(SSNLF)预警：产品面临</text>
<text x="978" y="1017" textLength="252" lengthAdjust="spacingAndGlyphs">博安生物地舒单抗（60mg）在玻利维亚获批上市</text>
<text x="1468" y="1017" textLength="279" lengthAdjust="spacingAndGlyphs">*英伟达Rubin 的“暴力美学”：回归“一张大冷板”</text>
<text x="1791" y="1017" textLength="102" lengthAdjust="spacingAndGlyphs">CBS成AI终端竞技场</text>
</g>
<!-- status bar -->
<circle cx="12" cy="1040" r="6" fill="#6c7484"/><path d="M9 1039l3 3 3-3" stroke="#222" fill="none"/>
<g class="st" fill="#f0f0f0"><text class="cj" x="25" y="1040" textLength="29" lengthAdjust="spacingAndGlyphs">上证</text><text x="241" y="1040" textLength="51" lengthAdjust="spacingAndGlyphs">11974亿</text><text class="cj" x="299" y="1040" textLength="29" lengthAdjust="spacingAndGlyphs">深证</text><text x="516" y="1040" textLength="51" lengthAdjust="spacingAndGlyphs">16568亿</text><text class="cj" x="574" y="1040" textLength="29" lengthAdjust="spacingAndGlyphs">创业</text><text x="790" y="1040" textLength="45" lengthAdjust="spacingAndGlyphs">7633亿</text><text class="cj" x="852" y="1040" textLength="43" lengthAdjust="spacingAndGlyphs">总成交</text><text x="902" y="1040" textLength="53" lengthAdjust="spacingAndGlyphs">28818亿</text><text class="cj" x="1002" y="1040" textLength="36" lengthAdjust="spacingAndGlyphs">已连接</text></g>
<g class="st" fill="#f24040"><text x="60" y="1040" textLength="49" lengthAdjust="spacingAndGlyphs">4085.77</text><text x="138" y="1040" textLength="27" lengthAdjust="spacingAndGlyphs">2.10</text><text x="184" y="1040" textLength="38" lengthAdjust="spacingAndGlyphs">0.05%</text><text x="336" y="1040" textLength="56" lengthAdjust="spacingAndGlyphs">14030.56</text><text x="412" y="1040" textLength="26" lengthAdjust="spacingAndGlyphs">8.01</text><text x="457" y="1040" textLength="39" lengthAdjust="spacingAndGlyphs">0.06%</text><text x="610" y="1040" textLength="50" lengthAdjust="spacingAndGlyphs">3329.69</text><text x="683" y="1040" textLength="33" lengthAdjust="spacingAndGlyphs">10.40</text><text x="733" y="1040" textLength="39" lengthAdjust="spacingAndGlyphs">0.31%</text></g>
<circle cx="971" cy="1040" r="6" fill="none" stroke="#7a8090" stroke-width="1.500"/><path d="M969 1044l4-8" stroke="#7a8090"/>
<rect x="983" y="1033" width="11" height="14" rx="3" fill="#4a5060"/><text x="988.500" y="1040" font-size="11" fill="#ddd" class="mid">3</text>
<g fill="#8c94a4"><rect x="1726" y="1035" width="15" height="10" rx="2"/><rect x="1762" y="1032" width="3" height="16"/><rect x="1767" y="1035" width="3" height="10"/></g>
<circle cx="1793" cy="1040" r="6" fill="none" stroke="#7a8090" stroke-dasharray="3 2"/>
<rect x="1819" y="1037" width="8" height="11" fill="#eee"/><path d="M1819 1033v3M1823 1032v4M1827 1033v3" stroke="#eee" stroke-width="1.500"/>
<text x="1845" y="1040" font-size="13" fill="#d0a868" textLength="47" lengthAdjust="spacingAndGlyphs">15:33:36</text>

<!-- sidebar icons -->
<g fill="#f4f8ff" stroke="#2a70d8" stroke-width="1.200">
<path d="M1900 42l7-6v3h7v7h-7v3z"/>
<path d="M1908 57l7 7h-3.500v7h-7v-7h-3.500z"/>
<path d="M1904.500 81h7v7h3.500l-7 7-7-7h3.500z"/>
<rect x="1900.500" y="104" width="14" height="14"/><rect x="1900.500" y="126" width="14" height="14"/><rect x="1900.500" y="150" width="14" height="14"/><rect x="1900.500" y="172" width="14" height="14"/><rect x="1900.500" y="198" width="11" height="11"/><rect x="1900.500" y="220" width="15" height="14"/><rect x="1900.500" y="243" width="15" height="14"/><rect x="1900.500" y="266" width="15" height="14"/><rect x="1900.500" y="289" width="15" height="14"/><rect x="1900.500" y="312" width="15" height="14" rx="5"/><rect x="1900.500" y="334" width="15" height="14"/><rect x="1900.500" y="365" width="15" height="14"/><rect x="1900.500" y="489" width="15" height="14"/><rect x="1900.500" y="511" width="15" height="14"/>
</g>
<path d="M1903 108h7M1903 112h5M1903 115h8" stroke="#c22" fill="none"/>
<path d="M1903 129v9M1907.500 129v9M1912 129v9" stroke="#c22" stroke-width="2" stroke-dasharray="2 1" fill="none"/>
<path d="M1902 161l4-3 3 2 4-5" stroke="#e22" fill="none"/>
<path d="M1904 175v8" stroke="#0a0" stroke-width="2"/><path d="M1908 174v9M1912 176v6" stroke="#e22" stroke-width="2"/>
<path d="M1903 195h11v11" stroke="#2a70d8" fill="none"/><path d="M1903 201h6M1903 204h6" stroke="#2a70d8"/>
<g font-size="10" fill="#1a5ac8" text-anchor="middle"><text x="1908" y="227" textLength="12">F10</text><text x="1908" y="296" textLength="12">F12</text><text x="1908" y="319" font-style="italic" fill="#0a7a6a" textLength="12">f(x)</text><text x="1908" y="496" textLength="12">FS</text></g>
<path d="M1903 246h4v3h-4zM1909 250h4v3h-4zM1909 254h3" stroke="#e08020" fill="none"/>
<rect x="1904" y="268" width="8" height="10" fill="#e84818"/>
<circle cx="1908" cy="341" r="4.500" fill="none" stroke="#1a5ac8" stroke-width="1.500"/>
<path d="M1903 371l3-2 2 2 3-2 3 2M1903 375l3-2 2 2 3-2 3 2" stroke="#c22" fill="none"/>
<text x="1908" y="395" font-size="11" font-weight="700" fill="#1a3aa8" text-anchor="middle" textLength="15">RSI</text>
<text x="1908" y="418" font-size="16" font-weight="700" fill="#c82020" text-anchor="middle">S</text>
<path d="M1908 435l3 3h-2v3h3v-2l3 3-3 3v-2h-3v3h2l-3 3-3-3h2v-3h-3v2l-3-3 3-3v2h3v-3h-2z" fill="#1a4ac8"/>
<path d="M1902 470l2-5 8-7 3 3-8 7z" fill="#e8a040" stroke="#a06020" stroke-width=".6"/>
<circle cx="1908" cy="518" r="4.500" fill="none" stroke="#30b030" stroke-width="3"/>
<path class="cr" d="M1899 356H1915M1899 479H1915" stroke="#aaa" fill="none"/>
<rect class="cr" x="1897" y="646" width="23" height="22" fill="#fafafa" stroke="#aaa"/>
<g class="side">
<text x="1907" y="541">1</text><text x="1907" y="564">5</text><text x="1907" y="587" textLength="13">15</text><text x="1907" y="610" textLength="13">30</text><text x="1907" y="633" textLength="13">60</text><text x="1908" y="657">日</text><text x="1908" y="679">周</text><text x="1908" y="702">月</text><text x="1907" y="725">N</text><text x="1908" y="748">多</text><text x="1908" y="771">季</text><text x="1908" y="794">年</text>
</g>
</svg>
</body></html>
